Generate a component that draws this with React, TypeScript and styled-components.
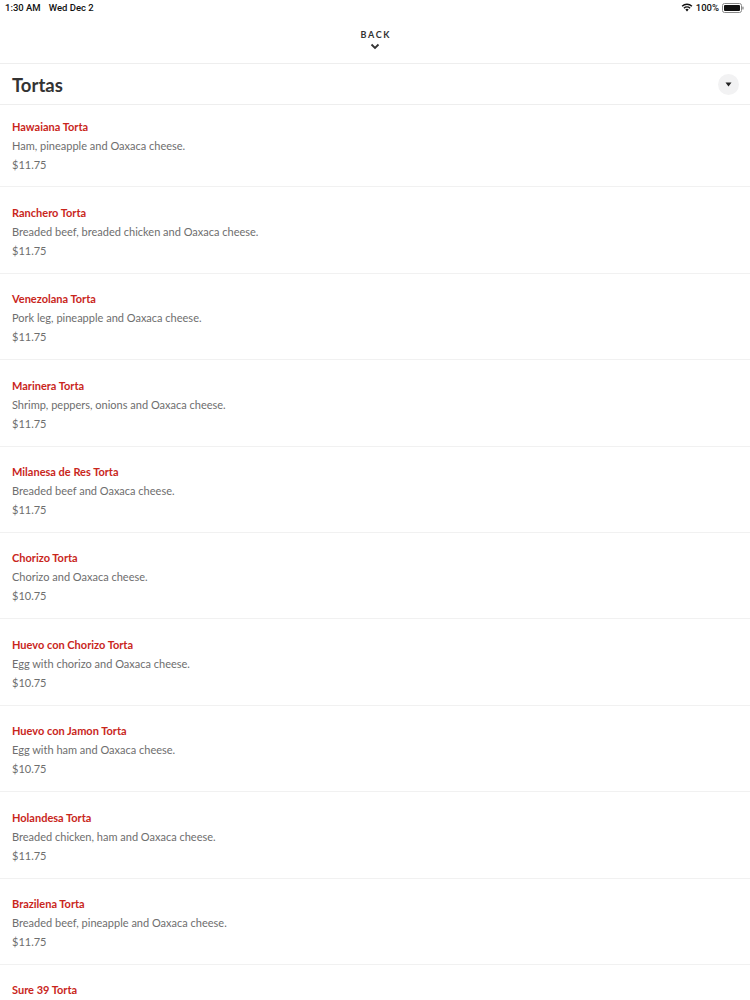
import React from "react";
import styled, { createGlobalStyle } from "styled-components";

const Global = createGlobalStyle`
  html, body { margin: 0; padding: 0; background: #fff; }
  body { font-family: Lato, "Noto Sans", sans-serif; -webkit-font-smoothing: antialiased; }
`;

const Page = styled.div`
  width: 750px;
  height: 1000px;
  overflow: hidden;
  background: #fff;
`;

const StatusBar = styled.div`
  height: 17px;
  display: flex;
  align-items: center;
  justify-content: space-between;
  padding: 0 6px 2px 5px;
  box-sizing: border-box;
  font-family: Roboto, "Liberation Sans", Arial, sans-serif;
  font-size: 9.5px;
  font-weight: 500;
  color: #111;
`;

const StatusLeft = styled.div`
  display: flex;
  gap: 8px;
`;

const StatusRight = styled.div`
  display: flex;
  align-items: center;
  gap: 3px;
`;

const TopNav = styled.div`
  height: 47px;
  display: flex;
  flex-direction: column;
  align-items: center;
  padding-top: 12px;
  box-sizing: border-box;
  border-bottom: 1px solid #eeeeee;
`;

const BackLabel = styled.div`
  font-size: 9px;
  font-weight: 700;
  letter-spacing: 1.6px;
  color: #333;
  line-height: 11px;
  padding-left: 1.6px;
`;

const SectionHeader = styled.div`
  height: 41px;
  box-sizing: border-box;
  display: flex;
  align-items: center;
  justify-content: space-between;
  padding: 1px 12px 0;
  border-bottom: 1px solid #eeeeee;
`;

const SectionTitle = styled.h1`
  margin: 0;
  font-size: 18.5px;
  font-weight: 700;
  color: #333;
`;

const Toggle = styled.div`
  width: 21px;
  height: 21px;
  border-radius: 50%;
  background: #f2f2f3;
  display: flex;
  align-items: center;
  justify-content: center;
  margin-right: -1px;
`;

const List = styled.div`
  display: flex;
  flex-direction: column;
`;

const Row = styled.div`
  flex: none;
  height: 86.4px;
  box-sizing: border-box;
  padding: 15.5px 12px 0;
  border-bottom: 1px solid #f1f1f1;
  display: flex;
  flex-direction: column;

  &:first-child {
    height: 82.4px;
    padding-top: 11.5px;
  }
`;

const ItemName = styled.div`
  font-size: 11px;
  font-weight: 700;
  color: #c9261c;
  line-height: 19px;
`;

const ItemText = styled.div`
  font-size: 11px;
  color: #6e6e6e;
  line-height: 19px;
`;

const items = [
  ["Hawaiana Torta", "Ham, pineapple and Oaxaca cheese.", "$11.75"],
  ["Ranchero Torta", "Breaded beef, breaded chicken and Oaxaca cheese.", "$11.75"],
  ["Venezolana Torta", "Pork leg, pineapple and Oaxaca cheese.", "$11.75"],
  ["Marinera Torta", "Shrimp, peppers, onions and Oaxaca cheese.", "$11.75"],
  ["Milanesa de Res Torta", "Breaded beef and Oaxaca cheese.", "$11.75"],
  ["Chorizo Torta", "Chorizo and Oaxaca cheese.", "$10.75"],
  ["Huevo con Chorizo Torta", "Egg with chorizo and Oaxaca cheese.", "$10.75"],
  ["Huevo con Jamon Torta", "Egg with ham and Oaxaca cheese.", "$10.75"],
  ["Holandesa Torta", "Breaded chicken, ham and Oaxaca cheese.", "$11.75"],
  ["Brazilena Torta", "Breaded beef, pineapple and Oaxaca cheese.", "$11.75"],
  ["Sure 39 Torta", "Breaded chicken, pineapple and Oaxaca cheese.", "$11.75"],
];

export default function App() {
  return (
    <Page>
      <Global />
      <StatusBar>
        <StatusLeft>
          <span>1:30 AM</span>
          <span>Wed Dec 2</span>
        </StatusLeft>
        <StatusRight>
          <svg width="12" height="9" viewBox="0 0 12 9">
            <path d="M6 8.5 L4.3 6.6 A2.5 2.5 0 0 1 7.7 6.6 Z" fill="#111" />
            <path d="M2.9 5.2 A4.4 4.4 0 0 1 9.1 5.2" stroke="#111" strokeWidth="1.4" fill="none" />
            <path d="M1.1 3.3 A7 7 0 0 1 10.9 3.3" stroke="#111" strokeWidth="1.4" fill="none" />
          </svg>
          <span>100%</span>
          <svg width="22" height="10" viewBox="0 0 22 10">
            <rect x="0.5" y="0.5" width="19" height="9" rx="2" fill="none" stroke="#888" />
            <rect x="2" y="2" width="16" height="6" rx="1" fill="#111" />
            <rect x="20.3" y="3.5" width="1.3" height="3" rx="0.6" fill="#888" />
          </svg>
        </StatusRight>
      </StatusBar>
      <TopNav>
        <BackLabel>BACK</BackLabel>
        <svg width="10" height="7" viewBox="0 0 10 7" style={{ marginTop: 3 }}>
          <path d="M1.5 1.5 L5 5 L8.5 1.5" stroke="#333" strokeWidth="1.8" fill="none" />
        </svg>
      </TopNav>
      <SectionHeader>
        <SectionTitle>Tortas</SectionTitle>
        <Toggle>
          <svg width="7" height="5" viewBox="0 0 7 5">
            <path d="M0.5 0.5 H6.5 L3.5 4.5 Z" fill="#222" />
          </svg>
        </Toggle>
      </SectionHeader>
      <List>
        {items.map(([name, desc, price]) => (
          <Row key={name}>
            <ItemName>{name}</ItemName>
            <ItemText>{desc}</ItemText>
            <ItemText>{price}</ItemText>
          </Row>
        ))}
      </List>
    </Page>
  );
}
